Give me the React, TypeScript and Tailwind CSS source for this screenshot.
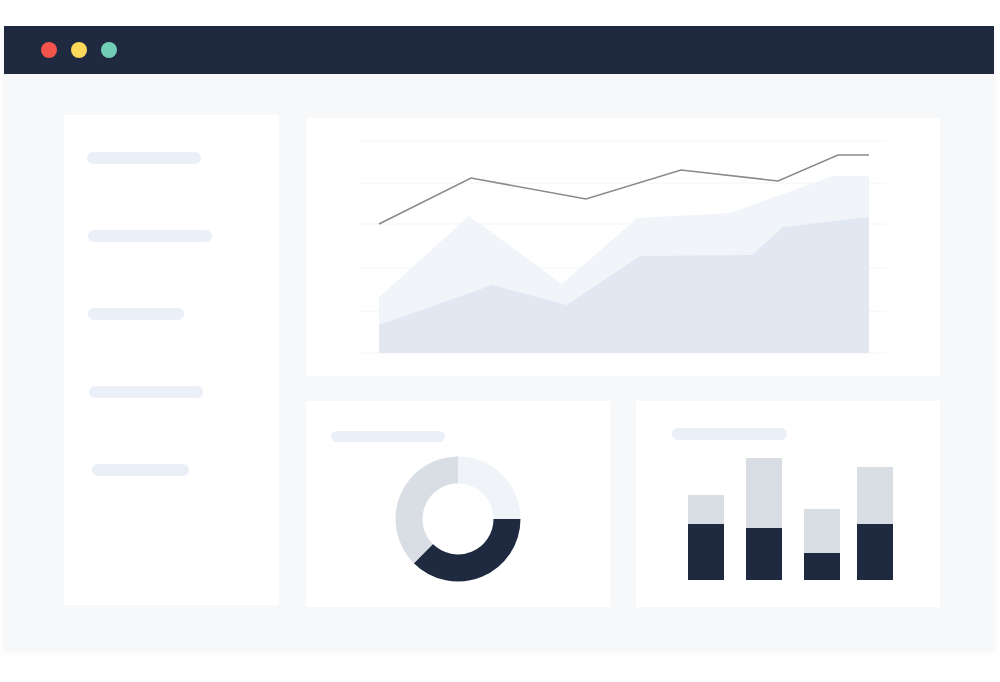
import React from "react";

const NAV_BARS = [
  { w: "w-[114px]", ml: "ml-[23px]" },
  { w: "w-[124px]", ml: "ml-[24px]" },
  { w: "w-[96px]", ml: "ml-[24px]" },
  { w: "w-[114px]", ml: "ml-[25px]" },
  { w: "w-[97px]", ml: "ml-[28px]" },
];

const BARS = [
  { total: 85, dark: 56, ml: 52 },
  { total: 122, dark: 52, ml: 22 },
  { total: 71, dark: 27, ml: 22 },
  { total: 113, dark: 56, ml: 17 },
];

function arc(cx: number, cy: number, r: number, a0: number, a1: number) {
  // angles in degrees, clockwise from 12 o'clock
  const p = (a: number) => {
    const rad = ((a - 90) * Math.PI) / 180;
    return [cx + r * Math.cos(rad), cy + r * Math.sin(rad)];
  };
  const [x0, y0] = p(a0);
  const [x1, y1] = p(a1);
  const large = a1 - a0 > 180 ? 1 : 0;
  return `M ${x0} ${y0} A ${r} ${r} 0 ${large} 1 ${x1} ${y1}`;
}

function AreaChart() {
  const grid = [23, 65, 106, 150, 193, 235];
  return (
    <svg viewBox="0 0 634 258" className="h-full w-full">
      {grid.map((y) => (
        <line key={y} x1={54} x2={580} y1={y} y2={y} stroke="#f2f4f7" strokeWidth={1} />
      ))}
      <polygon
        points="73,179 163,98 256,166 331,100 424,95 527,58 563,58 563,235 73,235"
        fill="#f1f5fa"
      />
      <polygon
        points="73,207 186,167 261,187 334,138 446,137 477,109 563,99 563,235 73,235"
        fill="#e1e8f2"
      />
      <polyline
        points="73,106 165,60 280,81 375,52 472,63 532,37 563,37"
        fill="none"
        stroke="#8a8a8a"
        strokeWidth={1.6}
      />
    </svg>
  );
}

function Donut() {
  const c = 63;
  const r = 49;
  const sw = 27;
  return (
    <svg width={126} height={126} viewBox="0 0 126 126" className="mx-auto mt-[14px]">
      <path d={arc(c, c, r, 0, 90)} fill="none" stroke="#f0f3f8" strokeWidth={sw} />
      <path d={arc(c, c, r, 90, 225)} fill="none" stroke="#1f2a40" strokeWidth={sw} />
      <path d={arc(c, c, r, 225, 360)} fill="none" stroke="#d9dee5" strokeWidth={sw} />
    </svg>
  );
}

export default function App() {
  return (
    <div className="h-[682px] w-[1000px] overflow-hidden bg-white pt-[26px]">
      <div className="ml-[4px] w-[990px] shadow-[0_3px_6px_rgba(0,0,0,0.05)]">
        {/* title bar */}
        <div className="flex h-[48px] items-center gap-[14px] bg-[#1f2940] pl-[37px]">
          <span className="h-[16px] w-[16px] rounded-full bg-[#f2544c]" />
          <span className="h-[16px] w-[16px] rounded-full bg-[#fcd85a]" />
          <span className="h-[16px] w-[16px] rounded-full bg-[#72cdb7]" />
        </div>

        {/* body */}
        <div className="flex h-[575px] gap-[27px] bg-[#f6f8fa] pl-[60px] pt-[41px]">
          <aside className="flex h-[490px] w-[215px] flex-col bg-white pt-[37px]">
            {NAV_BARS.map((b, i) => (
              <div
                key={i}
                className={`h-[12px] rounded-full bg-[#ebeff8] ${b.w} ${b.ml} ${i > 0 ? "mt-[66px]" : ""}`}
              />
            ))}
          </aside>

          <main className="flex w-[634px] flex-col gap-[25px] pt-[3px]">
            <section className="h-[258px] bg-white">
              <AreaChart />
            </section>

            <div className="flex gap-[26px]">
              <section className="h-[206px] w-[304px] bg-white pl-[25px] pt-[30px]">
                <div className="h-[11px] w-[114px] rounded-full bg-[#ebeff8]" />
                <div className="-ml-[25px]">
                  <Donut />
                </div>
              </section>

              <section className="flex h-[206px] w-[304px] flex-col bg-white pt-[27px]">
                <div className="ml-[36px] h-[12px] w-[115px] rounded-full bg-[#ebeff8]" />
                <div className="flex flex-1 items-end pb-[27px]">
                  {BARS.map((b, i) => (
                    <div
                      key={i}
                      className="flex w-[36px] flex-col"
                      style={{ marginLeft: b.ml, height: b.total }}
                    >
                      <div className="flex-1 bg-[#d9dee5]" />
                      <div className="bg-[#1f2a40]" style={{ height: b.dark }} />
                    </div>
                  ))}
                </div>
              </section>
            </div>
          </main>
        </div>
      </div>
    </div>
  );
}
